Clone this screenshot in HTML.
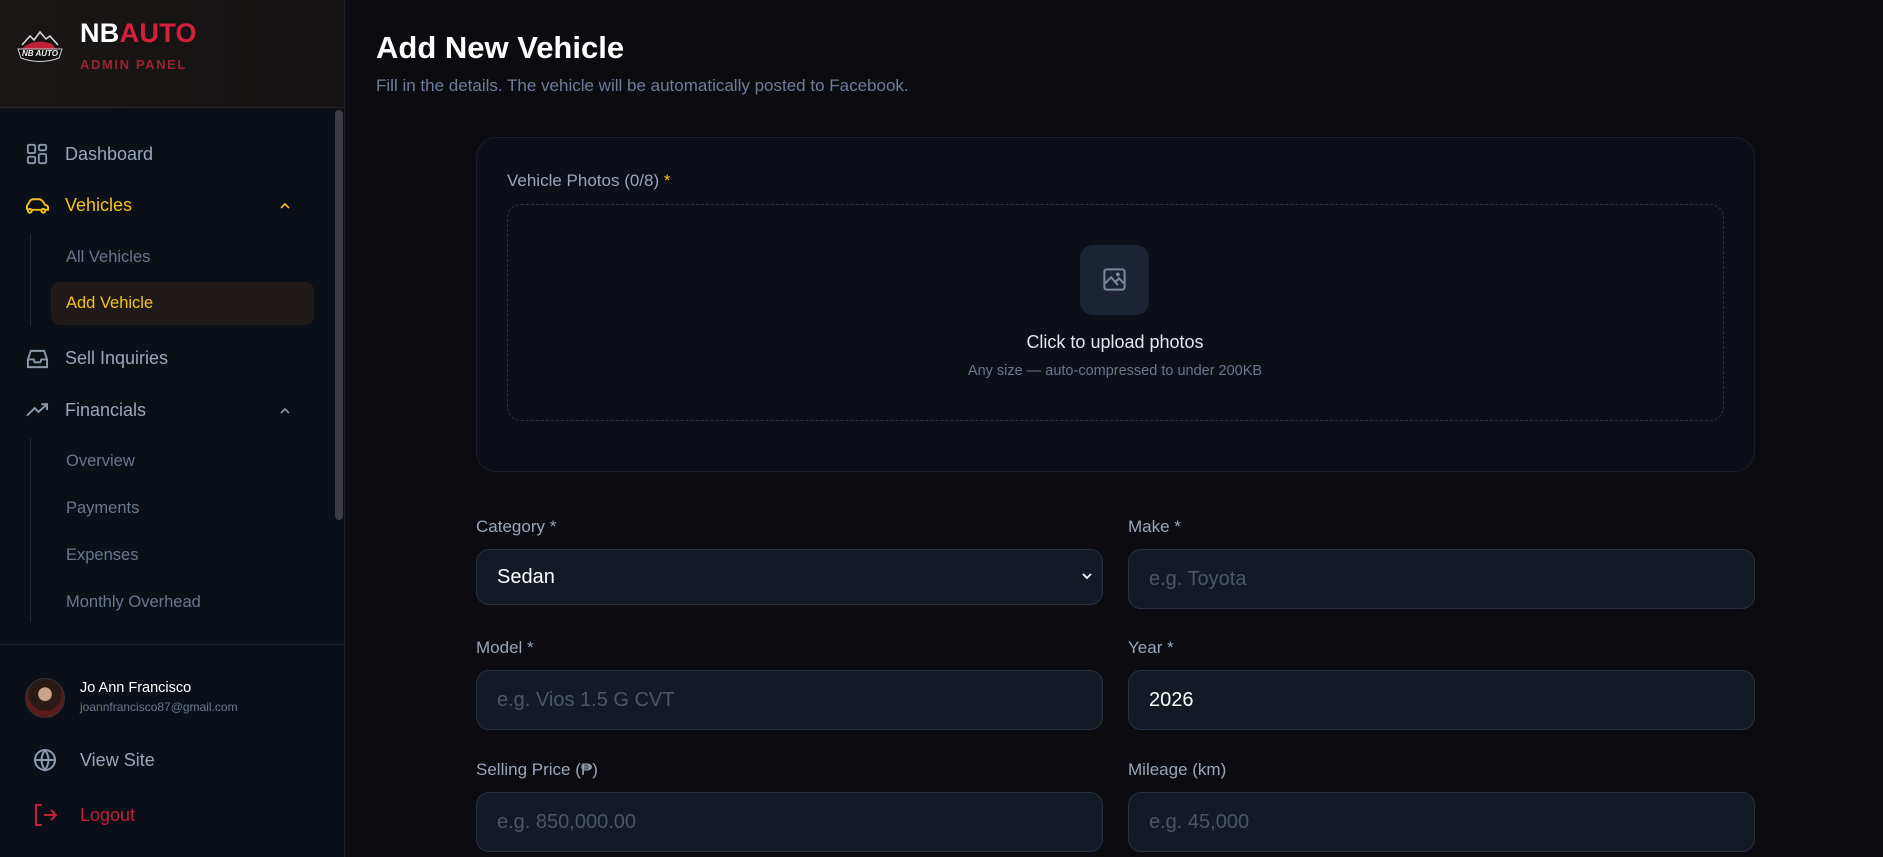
<!DOCTYPE html>
<html><head><meta charset="utf-8"><style>
*{box-sizing:border-box;margin:0;padding:0}
body{width:1883px;height:857px;overflow:hidden;background:#0b0b10;font-family:"Liberation Sans",sans-serif;position:relative}
.sb{position:absolute;left:0;top:0;width:345px;height:857px;background:#0b0f17;border-right:1px solid #1a1e27}
.hd{position:absolute;left:0;top:0;width:344px;height:108px;background:linear-gradient(90deg,#1a1616,#141212);border-bottom:1px solid #2a2628}
.a{position:absolute;white-space:nowrap}
.nav{font-size:18px;color:#9aa6ba}
.sub{font-size:16.5px;color:#6b7790}
.lbl{position:absolute;font-size:17px;color:#9aa6ba}
.inp{position:absolute;height:60px;background:#131925;border:1px solid #283041;border-radius:13px;font-size:20px;color:#4c5668;padding-left:20px;line-height:58px}
</style></head><body>
<div class="sb">
<div class="hd">
 <svg class="a" style="left:15px;top:30px" width="50" height="36" viewBox="0 0 48 36">
  <path d="M6 15 L14 6 L18 10 L24 2 L30 9 L34 6 L42 15" stroke="#ddd" stroke-width="1.5" fill="none"/>
  <path d="M8 17 Q20 8 36 14 L40 19 L6 19Z" fill="#c21f38"/>
  <path d="M2 19 H46 L43 28 Q24 35 5 28Z" fill="#111" stroke="#ccc" stroke-width="1"/>
  <text x="24" y="26" font-size="8" font-weight="bold" font-style="italic" fill="#eee" text-anchor="middle" font-family="Liberation Sans">NB AUTO</text>
 </svg>
 <div class="a" style="left:80px;top:18px;font-size:27px;font-weight:900;letter-spacing:0.3px"><span style="color:#fff">NB</span><span style="color:#d4203c">AUTO</span></div>
 <div class="a" style="left:80px;top:57px;font-size:13px;font-weight:bold;color:#9b2232;letter-spacing:1.6px">ADMIN PANEL</div>
</div>
<div class="a" style="left:335px;top:110px;width:8px;height:410px;background:#3a3c42;border-radius:4px"></div>
<svg class="a" style="left:26px;top:143px" width="22" height="22" viewBox="0 0 24 24" fill="none" stroke="#8d99ad" stroke-width="2"><rect x="2" y="2" width="8" height="9" rx="1.5"/><rect x="14" y="2" width="8" height="6" rx="1.5"/><rect x="14" y="12" width="8" height="10" rx="1.5"/><rect x="2" y="15" width="8" height="7" rx="1.5"/></svg>
<div class="a nav" style="left:65px;top:144px">Dashboard</div>
<svg class="a" style="left:25px;top:196px" width="25" height="20" viewBox="0 0 26 20" fill="none" stroke="#f2bf1f" stroke-width="2"><path d="M2 14 V10 L5 5 Q6 3 9 3 H15 Q17 3 19 6 L21 9 Q24 9 24 12 V14 H21 M7 14 H17"/><circle cx="5" cy="15" r="2"/><circle cx="19" cy="15" r="2"/></svg>
<div class="a nav" style="left:65px;top:195px;color:#f5c21e">Vehicles</div>
<svg class="a" style="left:279px;top:202px" width="12" height="8" viewBox="0 0 12 8" fill="none" stroke="#f5c21e" stroke-width="1.6"><path d="M2 6 L6 2 L10 6"/></svg>
<div class="a" style="left:30px;top:234px;width:1px;height:92px;background:#232a38"></div>
<div class="a sub" style="left:66px;top:248px">All Vehicles</div>
<div class="a" style="left:51px;top:282px;width:263px;height:43px;background:#1f1a17;border-radius:9px"></div>
<div class="a sub" style="left:66px;top:294px;color:#f5c21e">Add Vehicle</div>
<svg class="a" style="left:26px;top:348px" width="23" height="22" viewBox="0 0 24 23" fill="none" stroke="#8d99ad" stroke-width="2"><path d="M2 12 L5 3 H19 L22 12 V20 H2Z M2 12 H8 L9 15 H15 L16 12 H22"/></svg>
<div class="a nav" style="left:65px;top:348px">Sell Inquiries</div>
<svg class="a" style="left:26px;top:402px" width="23" height="16" viewBox="0 0 24 16" fill="none" stroke="#8d99ad" stroke-width="2"><path d="M1 14 L9 6 L13 10 L22 2 M16 2 H22 V8"/></svg>
<div class="a nav" style="left:65px;top:400px">Financials</div>
<svg class="a" style="left:279px;top:407px" width="12" height="8" viewBox="0 0 12 8" fill="none" stroke="#8d99ad" stroke-width="1.6"><path d="M2 6 L6 2 L10 6"/></svg>
<div class="a" style="left:30px;top:438px;width:1px;height:184px;background:#232a38"></div>
<div class="a sub" style="left:66px;top:452px">Overview</div>
<div class="a sub" style="left:66px;top:499px">Payments</div>
<div class="a sub" style="left:66px;top:546px">Expenses</div>
<div class="a sub" style="left:66px;top:593px">Monthly Overhead</div>
<div class="a" style="left:0;top:644px;width:344px;height:1px;background:#1d222c"></div>
<div class="a" style="left:25px;top:678px;width:40px;height:40px;border-radius:50%;background:radial-gradient(circle at 50% 40%,#c9a48a 0 22%,#2a1a14 24% 55%,#5b1a1c 57%);border:1px solid #333"></div>
<div class="a" style="left:80px;top:680px;font-size:14.5px;color:#fff">Jo Ann Francisco</div>
<div class="a" style="left:80px;top:700px;font-size:12px;color:#6b7790">joannfrancisco87@gmail.com</div>
<svg class="a" style="left:33px;top:748px" width="24" height="24" viewBox="0 0 24 24" fill="none" stroke="#8d99ad" stroke-width="2"><circle cx="12" cy="12" r="10"/><path d="M2 12 H22 M12 2 Q5 12 12 22 Q19 12 12 2"/></svg>
<div class="a nav" style="left:80px;top:750px">View Site</div>
<svg class="a" style="left:34px;top:804px" width="24" height="22" viewBox="0 0 24 22" fill="none" stroke="#c21f38" stroke-width="2"><path d="M8 1 H2 V21 H8 M10 11 H22 M17 6 L22 11 L17 16"/></svg>
<div class="a nav" style="left:80px;top:805px;color:#c21f38">Logout</div>
</div>

<div class="a" style="left:376px;top:30px;font-size:31px;font-weight:bold;color:#fff">Add New Vehicle</div>
<div class="a" style="left:376px;top:76px;font-size:17px;color:#6e7d9c">Fill in the details. The vehicle will be automatically posted to Facebook.</div>

<div class="a" style="left:476px;top:137px;width:1279px;height:335px;background:#0c0f17;border:1px solid #1a1f2b;border-radius:20px"></div>
<div class="lbl" style="left:507px;top:171px">Vehicle Photos (0/8) <span style="color:#f5c21e">*</span></div>
<div class="a" style="left:507px;top:204px;width:1217px;height:217px;border:1.5px dashed #2b3345;border-radius:14px"></div>
<div class="a" style="left:1080px;top:245px;width:69px;height:70px;background:#1b2335;border-radius:13px"></div>
<svg class="a" style="left:1101px;top:266px" width="27" height="27" viewBox="0 0 24 24" fill="none" stroke="#7a879c" stroke-width="1.8"><rect x="3" y="3" width="18" height="18" rx="2"/><path d="M3 16 L9 10 L15 17 M13 14 L16 11 L21 16"/><circle cx="15" cy="7.5" r="0.8" fill="#7a879c"/></svg>
<div class="a" style="left:0;width:2230px;top:332px;text-align:center;font-size:18px;color:#e3e7ee">Click to upload photos</div>
<div class="a" style="left:0;width:2230px;top:363px;text-align:center;font-size:14.5px;color:#6b7790">Any size — auto-compressed to under 200KB</div>

<div class="lbl" style="left:476px;top:517px">Category *</div>
<div class="inp" style="left:476px;top:549px;width:627px;height:56px;line-height:54px;color:#fff">Sedan<svg style="position:absolute;right:10px;top:23px" width="10" height="7" viewBox="0 0 10 7" fill="none" stroke="#fff" stroke-width="1.8"><path d="M1 1 L5 5 L9 1"/></svg></div>
<div class="lbl" style="left:1128px;top:517px">Make *</div>
<div class="inp" style="left:1128px;top:549px;width:627px">e.g. Toyota</div>
<div class="lbl" style="left:476px;top:638px">Model *</div>
<div class="inp" style="left:476px;top:670px;width:627px">e.g. Vios 1.5 G CVT</div>
<div class="lbl" style="left:1128px;top:638px">Year *</div>
<div class="inp" style="left:1128px;top:670px;width:627px;color:#fff">2026</div>
<div class="lbl" style="left:476px;top:760px">Selling Price (₱)</div>
<div class="inp" style="left:476px;top:792px;width:627px">e.g. 850,000.00</div>
<div class="lbl" style="left:1128px;top:760px">Mileage (km)</div>
<div class="inp" style="left:1128px;top:792px;width:627px">e.g. 45,000</div>
</body></html>
